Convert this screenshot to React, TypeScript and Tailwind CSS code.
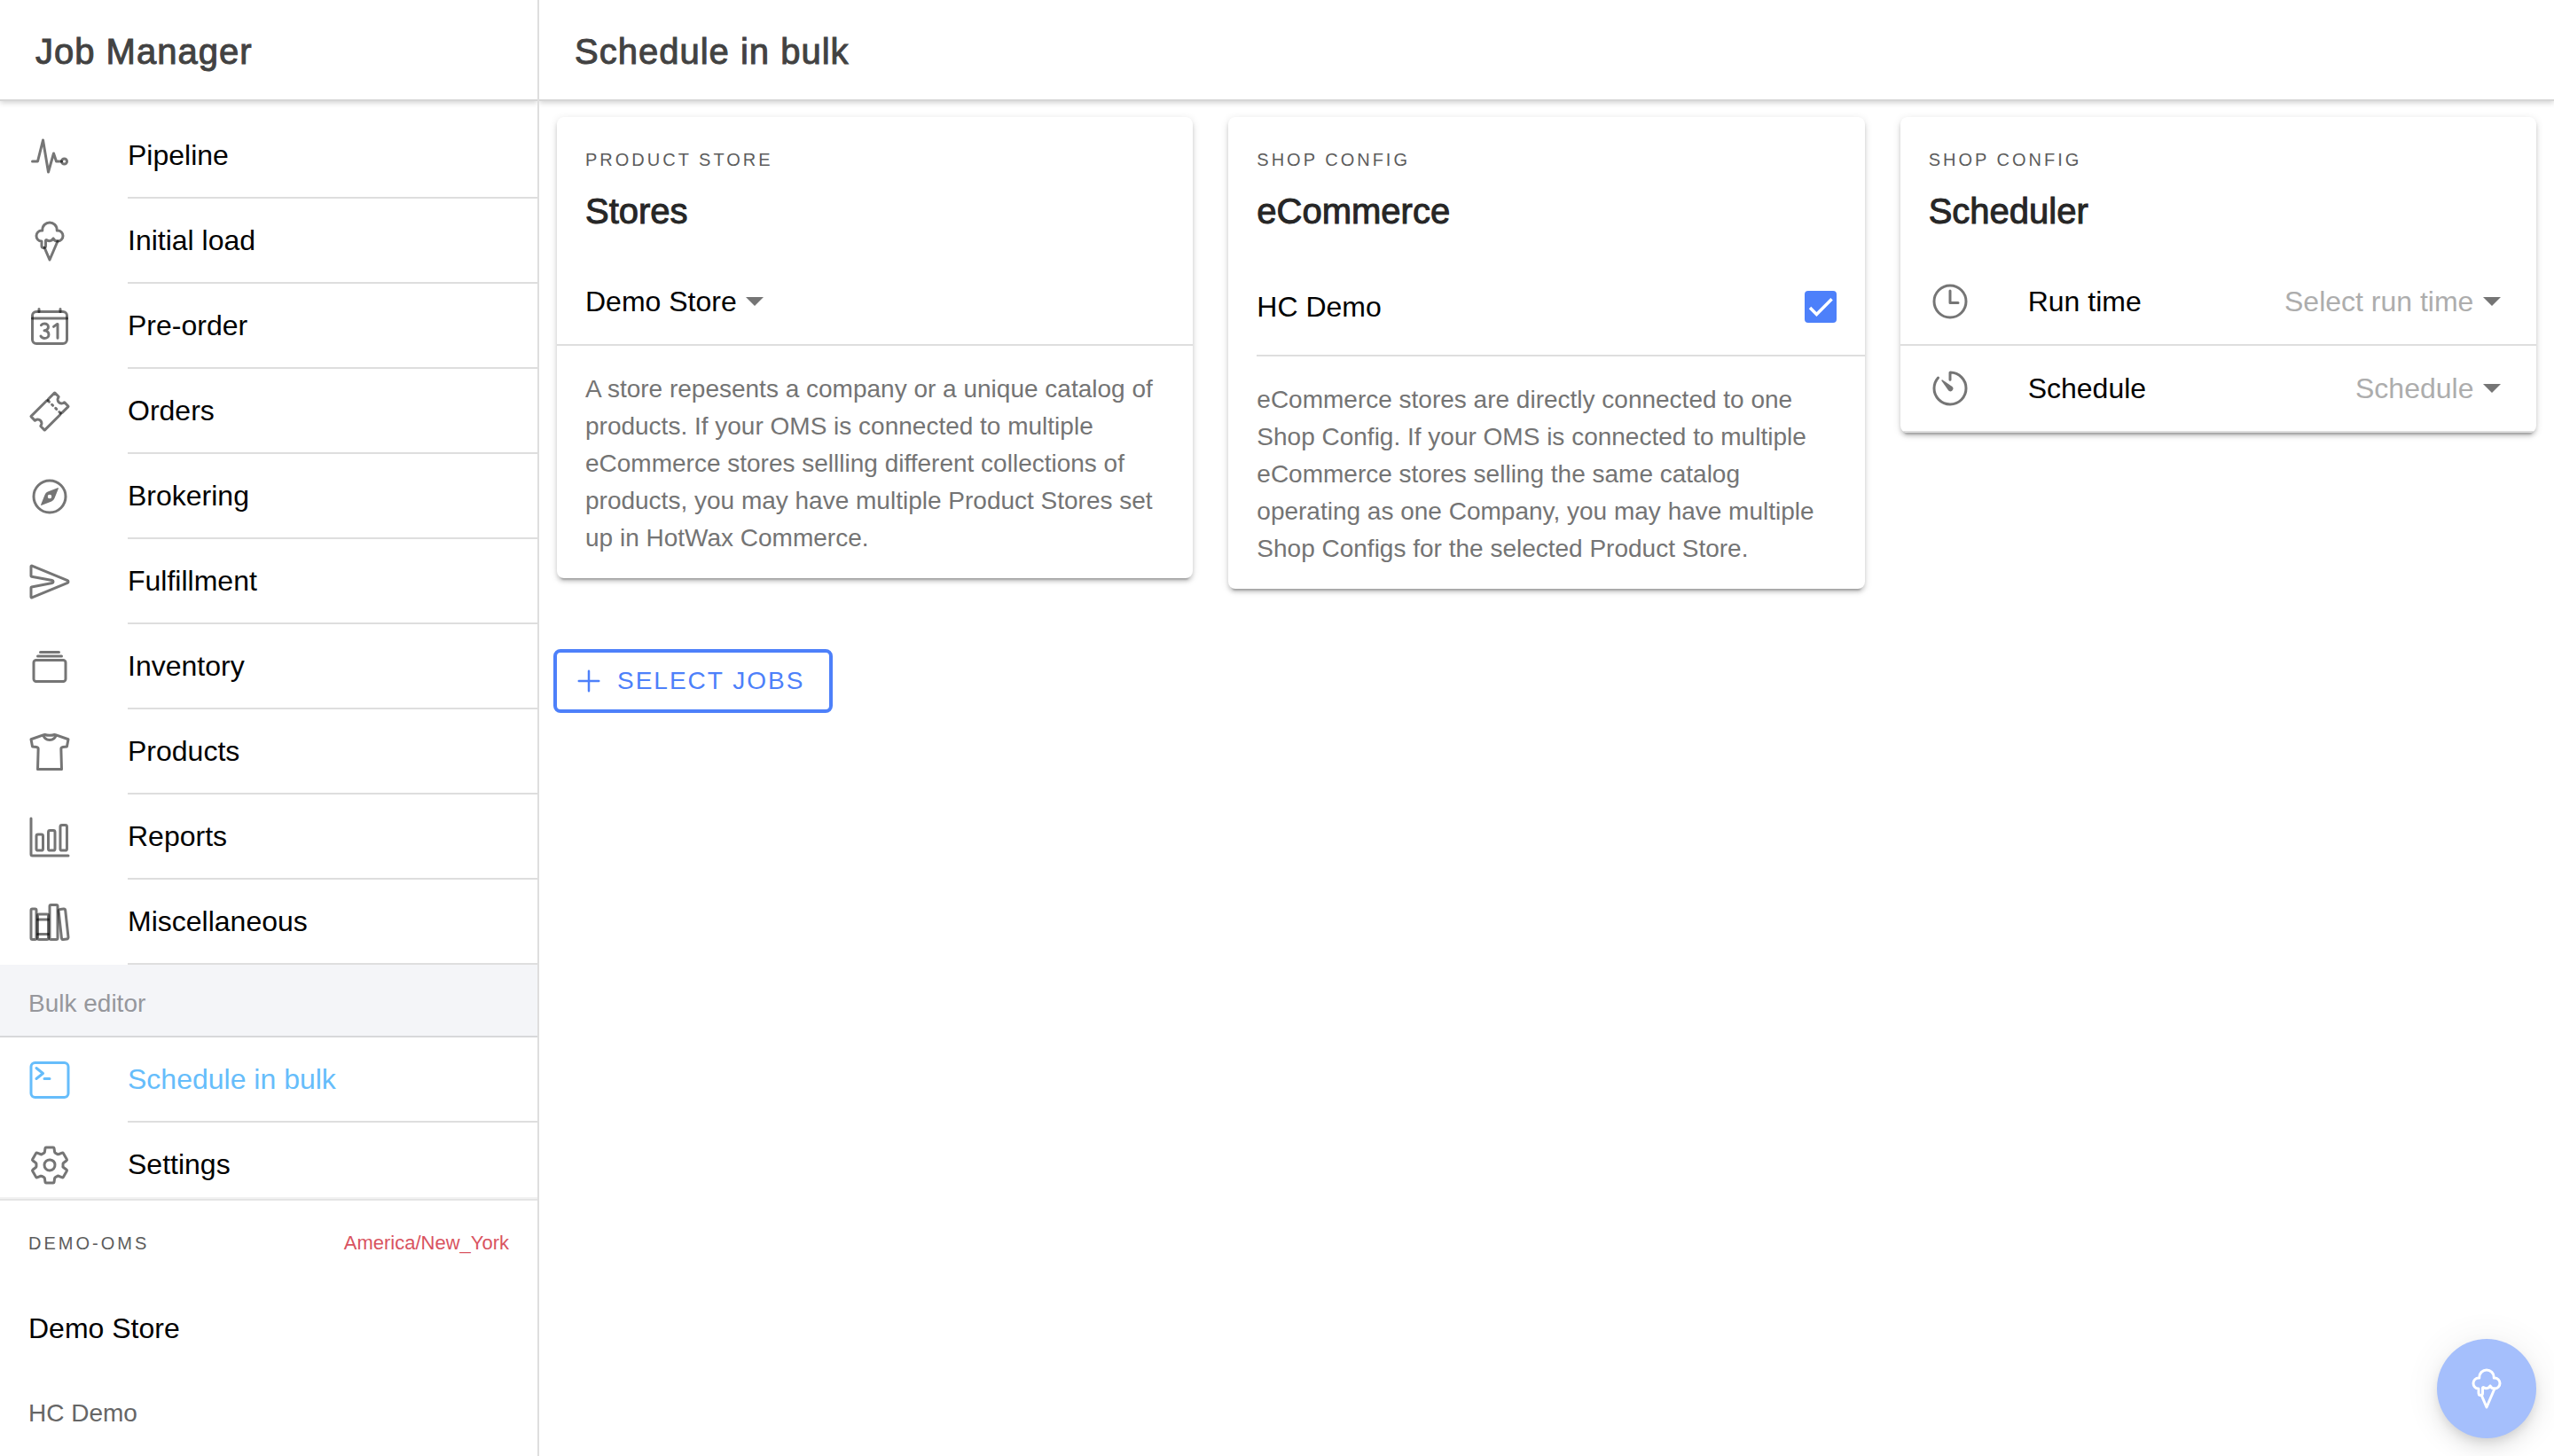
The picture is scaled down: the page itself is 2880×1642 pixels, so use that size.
import type { ReactNode } from "react";
import type { IconType } from "react-icons";
import {
  IoPulseOutline,
  IoIceCreamOutline,
  IoCalendarNumberOutline,
  IoTicketOutline,
  IoCompassOutline,
  IoSendOutline,
  IoAlbumsOutline,
  IoShirtOutline,
  IoBarChartOutline,
  IoLibraryOutline,
  IoTerminalOutline,
  IoSettingsOutline,
  IoTimeOutline,
  IoTimerOutline,
  IoAddOutline,
} from "react-icons/io5";

type NavEntry = { label: string; icon: IconType; active?: boolean };

const jobPages: NavEntry[] = [
  { label: "Pipeline", icon: IoPulseOutline },
  { label: "Initial load", icon: IoIceCreamOutline },
  { label: "Pre-order", icon: IoCalendarNumberOutline },
  { label: "Orders", icon: IoTicketOutline },
  { label: "Brokering", icon: IoCompassOutline },
  { label: "Fulfillment", icon: IoSendOutline },
  { label: "Inventory", icon: IoAlbumsOutline },
  { label: "Products", icon: IoShirtOutline },
  { label: "Reports", icon: IoBarChartOutline },
  { label: "Miscellaneous", icon: IoLibraryOutline },
];

const editorPages: NavEntry[] = [
  { label: "Schedule in bulk", icon: IoTerminalOutline, active: true },
  { label: "Settings", icon: IoSettingsOutline },
];

function Toolbar({ title }: { title: string }) {
  return (
    <header className="relative z-10 flex h-28 shrink-0 items-center bg-white px-10 pt-1 shadow-[0_2px_0_#d6d6d6,0_4px_6px_rgba(0,0,0,0.18)]">
      <h1 className="text-[40px] leading-[48px] tracking-[1px] text-[#424242] [-webkit-text-stroke:1px_#424242]">
        {title}
      </h1>
    </header>
  );
}

function NavRow({ label, icon: Icon, active }: NavEntry) {
  return (
    <li>
      <a
        href="#"
        aria-current={active ? "page" : undefined}
        className={active ? "flex h-24 pl-8 text-[#66bdfb]" : "flex h-24 pl-8 text-black"}
      >
        <Icon className={active ? "size-12 shrink-0 self-center" : "size-12 shrink-0 self-center text-black/54"} />
        <span className="ml-16 flex flex-1 items-center border-b-2 border-[#dedede] text-[32px] leading-10">
          {label}
        </span>
      </a>
    </li>
  );
}

function Card({ overline, title, children }: { overline: string; title: string; children: ReactNode }) {
  return (
    <section className="overflow-hidden rounded-lg bg-white shadow-[0_6px_2px_-4px_rgba(0,0,0,0.2),0_4px_4px_0_rgba(0,0,0,0.14),0_2px_10px_0_rgba(0,0,0,0.12)]">
      <div className="flex h-40 flex-col gap-4 px-8 pt-8">
        <p className="text-[20px] leading-8 tracking-[3px] text-[#5c5c5c] uppercase">{overline}</p>
        <h2 className="text-[40px] leading-[52px] text-[#262626] [-webkit-text-stroke:1px_#262626]">{title}</h2>
      </div>
      {children}
    </section>
  );
}

function Dropdown({ id, label, text, muted }: { id: string; label?: string; text: string; muted?: boolean }) {
  return (
    <span className="relative inline-flex items-center">
      <select
        id={id}
        aria-label={label}
        className={
          muted
            ? "appearance-none bg-transparent pr-[30px] text-[32px] leading-10 text-[#adadad]"
            : "appearance-none bg-transparent pr-[30px] text-[32px] leading-10 text-black"
        }
      >
        <option>{text}</option>
      </select>
      <svg viewBox="0 0 20 10" className="pointer-events-none absolute right-0 h-[10px] w-5" aria-hidden="true">
        <path d="M0 0h20L10 10z" fill="#757575" />
      </svg>
    </span>
  );
}

function ScheduleRow({ id, label, text, icon: Icon }: { id: string; label: string; text: string; icon: IconType }) {
  return (
    <div className="flex h-[98px] items-center border-b-2 border-[#dedede] pr-10 pl-8">
      <Icon className="size-12 shrink-0 text-black/54" />
      <label htmlFor={id} className="ml-16 flex-1 text-[32px] leading-10 text-black">
        {label}
      </label>
      <Dropdown id={id} text={text} muted />
    </div>
  );
}

export default function App() {
  return (
    <div className="flex h-screen bg-white font-['Liberation_Sans',Arial,sans-serif] text-black">
      <aside className="flex w-[608px] shrink-0 flex-col overflow-hidden border-r-2 border-[#dedede]">
        <Toolbar title="Job Manager" />
        <nav className="min-h-0 flex-1 overflow-y-auto pt-4 [scrollbar-width:none]">
          <ul>
            {jobPages.map((entry) => (
              <NavRow key={entry.label} {...entry} />
            ))}
          </ul>
          <h2 className="flex h-[82px] items-center border-b-2 border-[#d7d8da] bg-[#f4f5f8] px-8 pt-2 text-[28px] leading-9 text-[#96979c]">
            Bulk editor
          </h2>
          <ul>
            {editorPages.map((entry) => (
              <NavRow key={entry.label} {...entry} />
            ))}
          </ul>
        </nav>
        <footer className="relative shrink-0 border-t-2 border-[#e4e4e4] bg-white shadow-[0_-2px_0_#f2f2f2]">
          <div className="flex h-24 items-center justify-between px-8">
            <p className="text-[20px] leading-8 tracking-[3px] text-[#5c5c5c] uppercase">demo-oms</p>
            <p className="text-[22px] leading-8 text-[#d9535f]">America/New_York</p>
          </div>
          <p className="flex h-24 items-center px-8 text-[32px] leading-10">Demo Store</p>
          <p className="flex h-24 items-center px-8 text-[28px] leading-9 text-[#666666]">HC Demo</p>
        </footer>
      </aside>

      <main className="relative flex min-w-0 flex-1 flex-col overflow-hidden">
        <Toolbar title="Schedule in bulk" />
        <div className="grid grid-cols-3 items-start gap-10 p-5">
          <Card overline="Product Store" title="Stores">
            <div className="flex h-[98px] items-center border-b-2 border-[#dedede] px-8">
              <Dropdown id="store" label="Product store" text="Demo Store" />
            </div>
            <p className="px-8 pt-7 pb-6 text-[28px] leading-[42px] text-[#747474]">
              A store repesents a company or a unique catalog of products. If your OMS is connected to multiple
              eCommerce stores sellling different collections of products, you may have multiple Product Stores set up
              in HotWax Commerce.
            </p>
          </Card>

          <Card overline="Shop Config" title="eCommerce">
            <div className="ml-8 flex h-[110px] items-center border-b-2 border-[#dedede] pr-8">
              <label htmlFor="hc-demo" className="flex-1 text-[32px] leading-10">
                HC Demo
              </label>
              <span className="relative size-9">
                <input
                  id="hc-demo"
                  type="checkbox"
                  defaultChecked
                  className="block size-9 appearance-none rounded-sm bg-[#4d80fa]"
                />
                <svg viewBox="0 0 24 24" className="pointer-events-none absolute inset-1 size-7" aria-hidden="true">
                  <path d="M1.73 12.91 8.1 19.28 22.79 4.59" fill="none" stroke="#fff" strokeWidth="3" />
                </svg>
              </span>
            </div>
            <p className="px-8 pt-7 pb-6 text-[28px] leading-[42px] text-[#747474]">
              eCommerce stores are directly connected to one Shop Config. If your OMS is connected to multiple
              eCommerce stores selling the same catalog operating as one Company, you may have multiple Shop Configs
              for the selected Product Store.
            </p>
          </Card>

          <Card overline="Shop Config" title="Scheduler">
            <ScheduleRow id="run-time" label="Run time" text="Select run time" icon={IoTimeOutline} />
            <ScheduleRow id="schedule" label="Schedule" text="Schedule" icon={IoTimerOutline} />
          </Card>
        </div>

        <div className="px-4 pt-12">
          <button
            type="button"
            className="flex h-[72px] items-center gap-3 rounded-lg border-4 border-[#4d80fa] pr-7 pl-4 text-[28px] leading-9 tracking-[2px] text-[#4d80fa] uppercase"
          >
            <IoAddOutline className="size-10" />
            Select jobs
          </button>
        </div>

        <button
          type="button"
          disabled
          aria-label="Run initial load"
          className="absolute right-5 bottom-5 flex size-28 items-center justify-center rounded-full bg-[#4d80fa] text-white opacity-50 shadow-[0_6px_10px_-2px_rgba(0,0,0,0.2),0_12px_20px_0_rgba(0,0,0,0.14),0_2px_36px_0_rgba(0,0,0,0.12)]"
        >
          <IoIceCreamOutline className="size-12" />
        </button>
      </main>
    </div>
  );
}
